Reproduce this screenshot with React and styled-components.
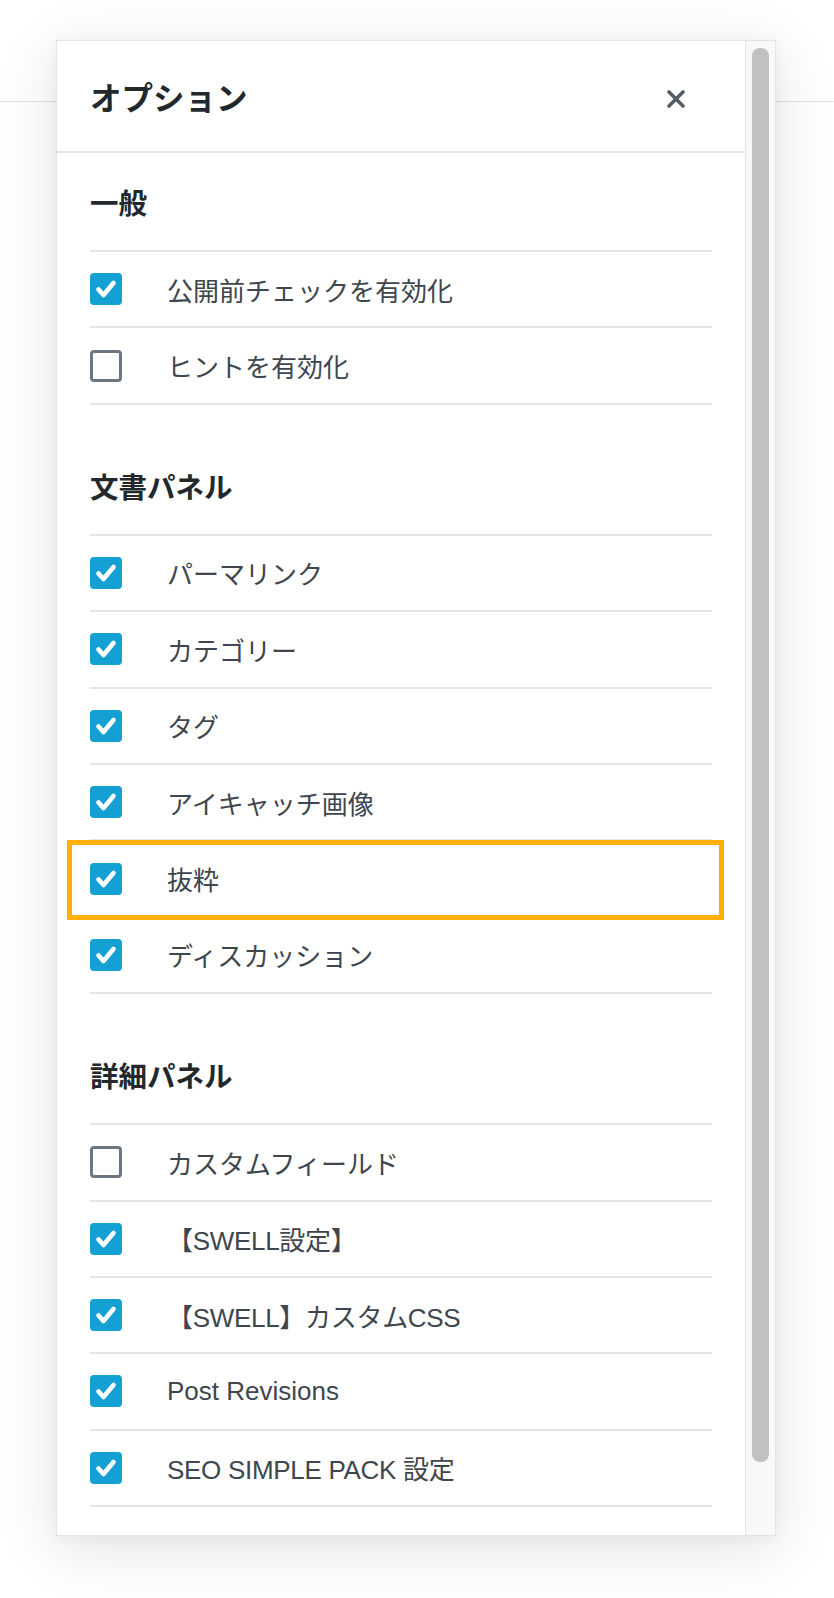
import React from "react";
import styled, { createGlobalStyle } from "styled-components";

const GlobalStyle = createGlobalStyle`
  html, body {
    margin: 0;
    padding: 0;
    background: #fff;
  }
  body {
    font-family: "Liberation Sans", "Noto Sans CJK JP", sans-serif;
    -webkit-font-smoothing: antialiased;
  }
`;

const Page = styled.div`
  position: relative;
  width: 834px;
  height: 1598px;
  overflow: hidden;
  background: #fff;
`;

const TopBar = styled.div`
  height: 101px;
  border-bottom: 1px solid #e4e6e9;
`;

const Modal = styled.div`
  position: absolute;
  top: 40px;
  left: 56px;
  width: 720px;
  height: 1496px;
  box-sizing: border-box;
  display: flex;
  background: #fff;
  border: 1px solid #e2e4e7;
  box-shadow: 0 12px 55px rgba(30, 35, 40, 0.13), 0 2px 12px rgba(30, 35, 40, 0.05);
  overflow: hidden;
`;

const Body = styled.div`
  flex: 1;
  min-width: 0;
  overflow: hidden;
`;

const Header = styled.div`
  height: 112px;
  box-sizing: border-box;
  display: flex;
  align-items: center;
  justify-content: space-between;
  padding: 0 33px;
  border-bottom: 2px solid #e2e4e7;
`;

const Title = styled.h1`
  margin: 0;
  font-size: 31.5px;
  font-weight: 700;
  color: #23282d;
`;

const CloseButton = styled.button`
  width: 40px;
  height: 40px;
  margin: 5px 16px 0 0;
  padding: 0;
  border: none;
  background: none;
  display: flex;
  align-items: center;
  justify-content: center;
  cursor: pointer;
`;

const Section = styled.section`
  padding: 0 33px;
  margin-top: ${(p) => (p.$first ? "0" : "32px")};
`;

const SectionTitle = styled.h2`
  margin: 0;
  height: 97px;
  display: flex;
  align-items: center;
  font-size: 28.5px;
  font-weight: 700;
  color: #23282d;
`;

const List = styled.ul`
  list-style: none;
  margin: 0;
  padding: 0;
  border-top: 2px solid #e2e4e7;
`;

const Row = styled.li`
  position: relative;
  height: 76.4px;
  box-sizing: border-box;
  display: flex;
  align-items: center;
  gap: 45px;
  border-bottom: 2px solid #e2e4e7;
`;

const Box = styled.span`
  width: 32px;
  height: 32px;
  box-sizing: border-box;
  border-radius: 4px;
  flex-shrink: 0;
  display: flex;
  align-items: center;
  justify-content: center;
  background: ${(p) => (p.$checked ? "#14a0d3" : "#fff")};
  border: ${(p) => (p.$checked ? "none" : "3px solid #6c7781")};
`;

const Label = styled.span`
  font-size: 26px;
  color: #40464d;
  white-space: nowrap;
  letter-spacing: ${(p) => (p.$latin ? "-0.3px" : "0")};
`;

const Highlight = styled.div`
  position: absolute;
  top: -1px;
  left: -23px;
  right: -12px;
  height: 80px;
  box-sizing: border-box;
  border: 5px solid #ffb000;
  pointer-events: none;
`;

const Track = styled.div`
  width: 30px;
  flex-shrink: 0;
  box-sizing: border-box;
  background: #f8f8f8;
  border-left: 1px solid #e2e4e7;
  padding: 7px 6px;
`;

const Thumb = styled.div`
  height: 1414px;
  border-radius: 8px;
  background: #c1c1c1;
`;

const sections = [
  {
    title: "一般",
    items: [
      { label: "公開前チェックを有効化", checked: true },
      { label: "ヒントを有効化", checked: false },
    ],
  },
  {
    title: "文書パネル",
    items: [
      { label: "パーマリンク", checked: true },
      { label: "カテゴリー", checked: true },
      { label: "タグ", checked: true },
      { label: "アイキャッチ画像", checked: true },
      { label: "抜粋", checked: true, highlight: true },
      { label: "ディスカッション", checked: true },
    ],
  },
  {
    title: "詳細パネル",
    items: [
      { label: "カスタムフィールド", checked: false },
      { label: "【SWELL設定】", checked: true, latin: true },
      { label: "【SWELL】カスタムCSS", checked: true, latin: true },
      { label: "Post Revisions", checked: true },
      { label: "SEO SIMPLE PACK 設定", checked: true, latin: true },
    ],
  },
];

const CheckMark = () => (
  <svg width="32" height="32" viewBox="0 0 32 32">
    <polyline
      points="8.5,16.5 13.5,22 23.5,10"
      fill="none"
      stroke="#fff"
      strokeWidth="4.6"
      strokeLinecap="round"
      strokeLinejoin="round"
    />
  </svg>
);

const CloseIcon = () => (
  <svg width="20" height="20" viewBox="0 0 20 20">
    <path d="M3 3 L17 17 M17 3 L3 17" stroke="#555d66" strokeWidth="3.6" strokeLinecap="round" />
  </svg>
);

export default function App() {
  return (
    <>
      <GlobalStyle />
      <Page>
        <TopBar />
        <Modal>
          <Body>
            <Header>
              <Title>オプション</Title>
              <CloseButton aria-label="閉じる">
                <CloseIcon />
              </CloseButton>
            </Header>
            {sections.map((s, i) => (
              <Section key={s.title} $first={i === 0}>
                <SectionTitle>{s.title}</SectionTitle>
                <List>
                  {s.items.map((item) => (
                    <Row key={item.label}>
                      <Box $checked={item.checked}>{item.checked && <CheckMark />}</Box>
                      <Label $latin={item.latin}>{item.label}</Label>
                      {item.highlight && <Highlight />}
                    </Row>
                  ))}
                </List>
              </Section>
            ))}
          </Body>
          <Track>
            <Thumb />
          </Track>
        </Modal>
      </Page>
    </>
  );
}
